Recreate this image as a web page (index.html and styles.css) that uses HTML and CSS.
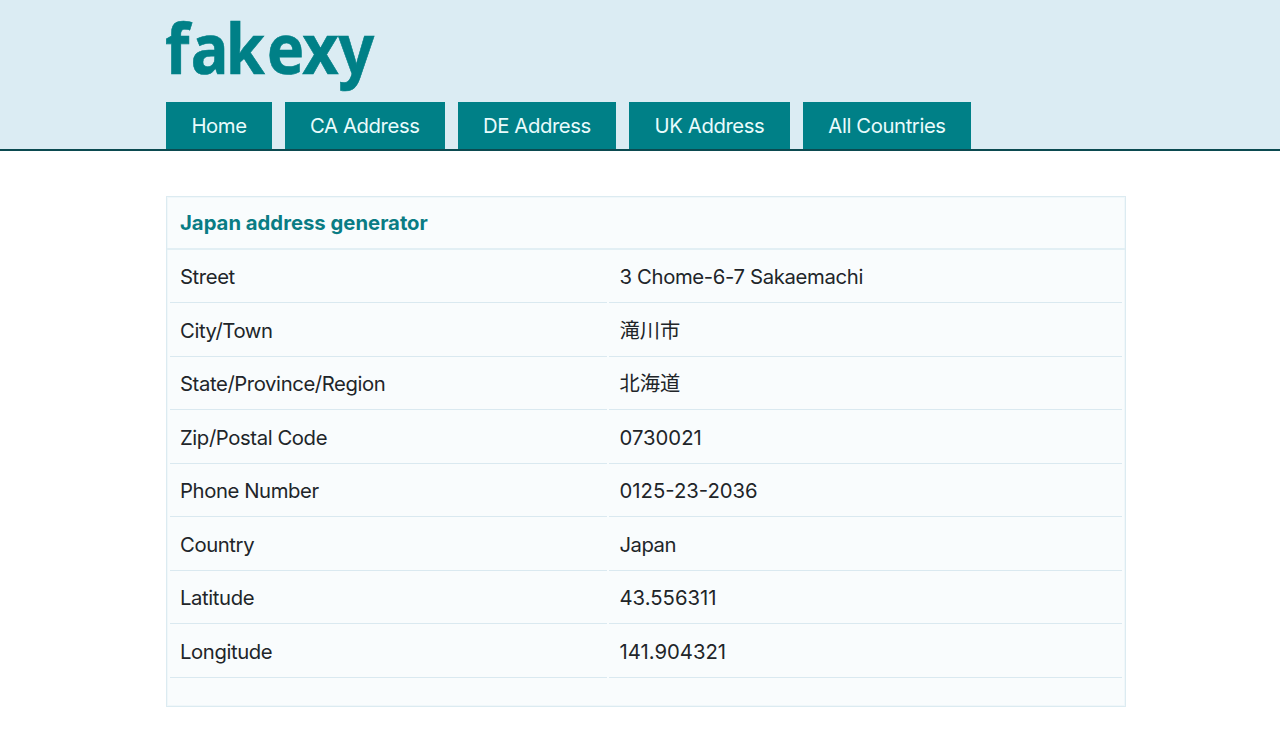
FILE: index.html
```html
<!DOCTYPE html>
<html lang="en">
<head>
  <meta charset="UTF-8" />
  <meta name="viewport" content="width=device-width, initial-scale=1.0" />
  <title>Japan address generator - Fakexy</title>
  <link rel="stylesheet" href="styles.css">
</head>
<body>
  <header class="header">
    <div class="container">
      <a class="logo" href="#">
        <svg width="212" height="76" viewBox="0 0 212 76">
          <text transform="scale(0.9 1)" y="57" x="-1 27.4 66.4 112 151.5 191.5">fakexy</text>
        </svg>
      </a>
      <nav class="nav">
        <a href="#" class="nav-home">Home</a>
        <a href="#" class="nav-ca">CA Address</a>
        <a href="#" class="nav-de">DE Address</a>
        <a href="#" class="nav-uk">UK Address</a>
        <a href="#" class="nav-all">All Countries</a>
      </nav>
    </div>
  </header>
  <main class="container">
    <section class="box">
      <h1>Japan address generator</h1>
      <dl class="list">
        <dt>Street</dt><dd class="street">3 Chome-6-7 Sakaemachi</dd>
        <dt>City/Town</dt><dd lang="ja">滝川市</dd>
        <dt>State/Province/Region</dt><dd lang="ja">北海道</dd>
        <dt>Zip/Postal Code</dt><dd>0730021</dd>
        <dt>Phone Number</dt><dd>0125-23-2036</dd>
        <dt>Country</dt><dd class="country">Japan</dd>
        <dt>Latitude</dt><dd>43.556311</dd>
        <dt>Longitude</dt><dd>141.904321</dd>
      </dl>
    </section>
  </main>
</body>
</html>
```
FILE: styles.css
```css
* { box-sizing: border-box; }
body {
  margin: 0;
  background: #fff;
  color: #212529;
  font-family: Inter, "Noto Sans CJK JP", sans-serif;
  font-size: 20.3px;
  letter-spacing: -0.4px;
  line-height: 30px;
}
.container {
  width: 960px;
  margin-left: 166px;
}
.header {
  height: 151px;
  padding-top: 17px;
  background: #dbecf3;
  border-bottom: 2px solid #0b4a50;
}
.logo {
  display: block;
  height: 70px;
}
.logo svg {
  display: block;
  overflow: visible;
}
.logo text {
  font-family: "Noto Sans", sans-serif;
  font-size: 70px;
  font-weight: 700;
  letter-spacing: 0;
  fill: #008087;
  stroke: #008087;
  stroke-width: 0.6px;
}
.nav {
  display: flex;
  gap: 12.8px;
  margin-top: 15.4px;
}
.nav a {
  height: 46.6px;
  display: flex;
  align-items: center;
  justify-content: center;
  background: #008087;
  color: #e9fbfc;
  text-decoration: none;
  white-space: nowrap;
}
.nav-home { width: 106px; }
.nav-ca { width: 160px; }
.nav-de { width: 158.7px; }
.nav-uk { width: 160.8px; }
.nav-all { width: 168.7px; }
.box {
  height: 511px;
  margin-top: 45px;
  background: #f9fcfd;
  border: 1px solid #dcebf1;
  box-shadow: inset 0 0 0 1px #f0f7fa;
}
.box h1 {
  height: 53px;
  margin: 0;
  padding: 11px 13px;
  border-bottom: 2px solid #e2eff4;
  color: #0a7c84;
  font-size: 20.3px;
  font-weight: 700;
  letter-spacing: 0;
}
.list {
  display: grid;
  grid-template-columns: 437px 513px;
  grid-auto-rows: 53.55px;
  column-gap: 2px;
  margin: -0.5px 0 0 3px;
}
.list dt,
.list dd {
  margin: 0;
  padding: 12.5px 10px;
  border-bottom: 1px solid #dae9f0;
  white-space: nowrap;
}
.list dd {
  padding-left: 10.5px;
  letter-spacing: 0;
}
.list .street { letter-spacing: -0.35px; }
.list .country { letter-spacing: -0.5px; }
```
